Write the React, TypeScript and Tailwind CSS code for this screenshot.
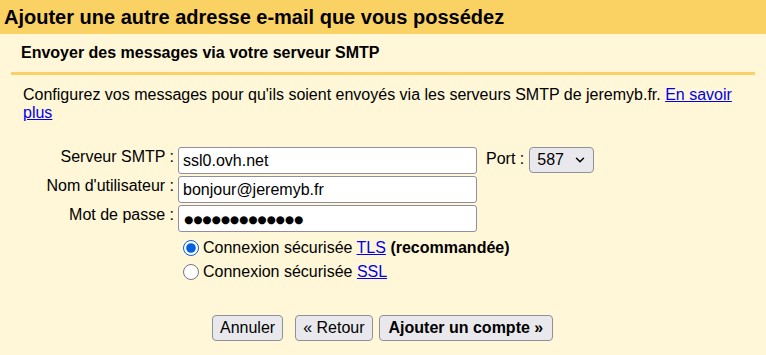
import { ChevronDown } from "lucide-react";

const font = "font-['Liberation_Sans',Arial,sans-serif]";

const Field = ({ label, value, dots = false }: { label: string; value: string; dots?: boolean }) => (
  <div className="flex items-start h-[29px]">
    <label className="w-[175px] text-right pr-[1px] leading-[18px] pt-[1px]">{label}</label>
    <input
      type="text"
      readOnly
      value={value}
      className={
        "ml-[3px] w-[299px] h-[27px] border border-[#8f8f9d] rounded-[3px] bg-white text-black outline-none " +
        (dots ? "text-[10.5px] px-[5px] font-['DejaVu_Sans',sans-serif]" : "text-[16px] px-[4px]")
      }
    />
  </div>
);

const Btn = ({ children, bold = false }: { children: React.ReactNode; bold?: boolean }) => (
  <button
    className={
      "h-[26px] bg-[#e9e9ed] border border-[#8f8f9d] rounded-[4px] text-[16px] text-black leading-none " +
      (bold ? "font-bold px-[9px]" : "px-[7px]")
    }
  >
    {children}
  </button>
);

export default function App() {
  return (
    <div className={`w-[766px] h-[355px] overflow-hidden bg-[#fff7d7] text-black text-[16px] ${font}`}>
      <div className="h-[34px] bg-[#fad163] px-[4px] flex items-center">
        <h1 className="text-[20px] font-bold leading-none">Ajouter une autre adresse e-mail que vous possédez</h1>
      </div>

      <div className="px-[11px]">
        <div className="h-[41px] flex items-center px-[10px] border-b-[3px] border-[#fad163]">
          <h2 className="text-[16px] font-bold leading-none">Envoyer des messages via votre serveur SMTP</h2>
        </div>

        <p className="pl-[12px] pr-[14px] mt-[11px] leading-[18px]">
          Configurez vos messages pour qu'ils soient envoyés via les serveurs SMTP de jeremyb.fr.{" "}
          <a href="#" className="text-[#0000ee] underline">En savoir plus</a>
        </p>

        <div className="mt-[25px] -ml-[11px]">
          <div className="flex items-start">
            <Field label="Serveur SMTP :" value="ssl0.ovh.net" />
            <span className="ml-[9px] pt-[1px] leading-[18px] mt-[2px]">Port :</span>
            <div className="ml-[5px] w-[65px] h-[26px] bg-[#e9e9ed] border border-[#8f8f9d] rounded-[4px] flex items-center pl-[7px] pr-[6px] justify-between">
              <span>587</span>
              <ChevronDown size={14} strokeWidth={2.5} />
            </div>
          </div>
          <Field label="Nom d'utilisateur :" value="bonjour@jeremyb.fr" />
          <Field label="Mot de passe :" value="●●●●●●●●●●●●●" dots />

          <div className="ml-[178px] mt-[5px] flex flex-col gap-[6px]">
            <label className="flex items-center h-[18px]">
              <input type="radio" name="sec" defaultChecked className="ml-[5px] mr-[4px] w-[16px] h-[16px] accent-[#0060df]" />
              <span>
                Connexion sécurisée <a href="#" className="text-[#0000ee] underline">TLS</a>{" "}
                <b>(recommandée)</b>
              </span>
            </label>
            <label className="flex items-center h-[18px]">
              <input type="radio" name="sec" className="ml-[5px] mr-[4px] w-[16px] h-[16px] accent-[#0060df]" />
              <span>
                Connexion sécurisée <a href="#" className="text-[#0000ee] underline">SSL</a>
              </span>
            </label>
          </div>

          <div className="ml-[212px] mt-[34px] flex items-center">
            <Btn>Annuler</Btn>
            <div className="ml-[12px] flex gap-[6px]">
              <Btn>« Retour</Btn>
              <Btn bold>Ajouter un compte »</Btn>
            </div>
          </div>
        </div>
      </div>
    </div>
  );
}
